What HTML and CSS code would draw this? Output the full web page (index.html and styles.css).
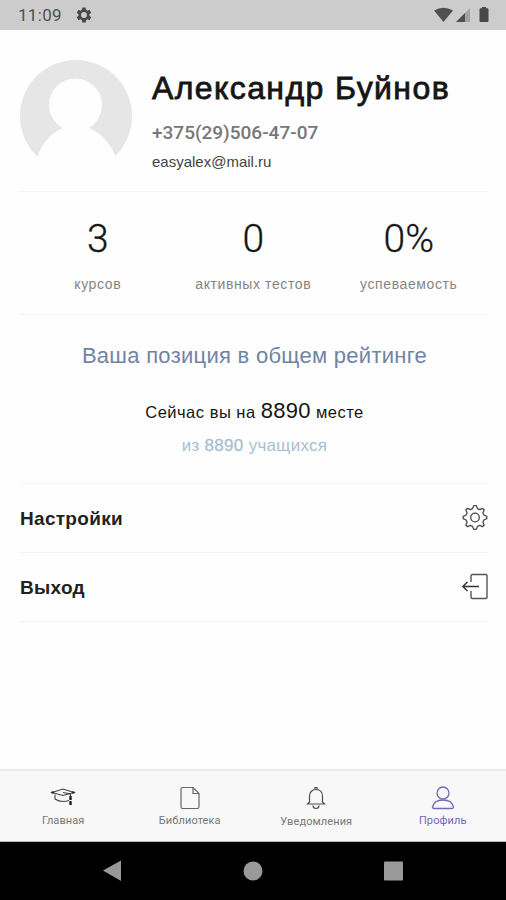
FILE: index.html
```html
<!DOCTYPE html>
<html lang="ru">
<head>
  <meta charset="UTF-8">
  <meta name="viewport" content="width=device-width, initial-scale=1.0">
  <title>Профиль</title>
  <link rel="stylesheet" href="styles.css">
</head>
<body>
  <div class="status-bar">
    <span class="time">11:09</span>
    <svg class="status-gear" width="16" height="16" viewBox="3.500 3 19 18"><path fill="#484848" fill-rule="evenodd" d="M19.400 13a7.500 7.500 0 0 0 0-2l2.100-1.600-2-3.500-2.500 1a7 7 0 0 0-1.700-1L15 3.200h-4l-.4 2.700a7 7 0 0 0-1.700 1l-2.500-1-2 3.500L6.500 11a7.500 7.500 0 0 0 0 2l-2.100 1.600 2 3.500 2.500-1a7 7 0 0 0 1.700 1l.4 2.700h4l.4-2.700a7 7 0 0 0 1.700-1l2.500 1 2-3.500zM13 15.500a3.500 3.500 0 1 1 0-7 3.500 3.500 0 0 1 0 7z"/></svg>
    <svg class="status-icons" width="58" height="18" viewBox="0 0 58 18">
      <path fill="#505050" d="M0 4.500Q9.500-1 19 4.500L9.500 16z"/>
      <path fill="#a2a2a2" d="M22 16 36 2v14z"/>
      <path fill="#505050" d="M22 16 31 7v9z"/>
      <path fill="#484848" d="M48 2.200V1h4v1.200h1.500q1 0 1 1V15q0 1-1 1h-7q-1 0-1-1V3.200q0-1 1-1z"/>
    </svg>
  </div>

  <main class="profile">
    <section class="user">
      <svg class="avatar" width="112" height="112" viewBox="0 0 112 112">
        <circle cx="56" cy="56" r="56" fill="#e6e6e6"/>
        <path fill="#fefefe" d="M18 95C23 82 31 73 43 68C34 63 29 54 29 45a26.500 26.500 0 0 1 53 0C82 54 77 63 69 68C81 73 89 82 95 95V112H18z"/>
      </svg>
      <div class="user-info">
        <h1>Александр Буйнов</h1>
        <div class="phone">+375(29)506-47-07</div>
        <div class="email">easyalex@mail.ru</div>
      </div>
    </section>

    <section class="stats">
      <div class="stat"><b>3</b><span>курсов</span></div>
      <div class="stat"><b>0</b><span>активных тестов</span></div>
      <div class="stat"><b>0%</b><span>успеваемость</span></div>
    </section>

    <section class="rating">
      <h2>Ваша позиция в общем рейтинге</h2>
      <p class="place">Сейчас вы на <b>8890</b> месте</p>
      <p class="total">из <b>8890</b> учащихся</p>
    </section>

    <a class="row">
      <span class="settings">Настройки</span>
      <svg width="28" height="28" viewBox="-14 -13.500 28 28" fill="none" stroke="#484848" stroke-width="1.300" stroke-linejoin="round">
        <path d="M-1.200-11.800H1.200L2.500-8.900L4.700-7.900L7.500-9.200L9.200-7.500L7.900-4.700L8.900-2.500L11.800-1.200V1.200L8.900 2.500L7.900 4.700L9.200 7.500L7.500 9.200L4.700 7.900L2.500 8.900L1.200 11.800H-1.200L-2.500 8.900L-4.700 7.900L-7.500 9.200L-9.200 7.500L-7.900 4.700L-8.900 2.500L-11.800 1.200V-1.200L-8.900-2.500L-7.900-4.700L-9.200-7.500L-7.500-9.200L-4.700-7.900L-2.500-8.900z"/>
        <circle r="4.300"/>
      </svg>
    </a>
    <a class="row">
      <span class="logout">Выход</span>
      <svg width="28" height="28" viewBox="0 0 28 28" fill="none" stroke="#555" stroke-width="1.400">
        <path d="M10 9V3q0-1.500 1.500-1.500H25q1 0 1 1V24.500q0 1-1 1H11.500q-1.500 0-1.500-1.500V18"/>
        <path stroke="#333" d="M18 13.500H2M6.500 9 1.800 13.500l4.700 4.500"/>
      </svg>
    </a>
  </main>

  <nav class="tabs">
    <a class="tab home">
      <svg width="26" height="26" viewBox="0 0 26 26" fill="none" stroke="#444" stroke-width="1.100">
        <path d="M2 7.500 13 4l11 3.500L13 10.500zM5 9.500V14q3.500 2.500 8 2.500 3 0 6-1M13 7.500l7.500 1.500v4"/>
        <path stroke="#222" stroke-width="2.400" stroke-dasharray="4 1" d="M20.500 11v9"/>
        <path stroke="#222" stroke-width="2" d="M1.500 7.500h2.500M22 7.500h2.500"/>
      </svg>
      <span>Главная</span>
    </a>
    <a class="tab library">
      <svg width="26" height="26" viewBox="0 0 26 26" fill="none" stroke="#666" stroke-width="1.200">
        <path d="M5.500 2.500H16l6 6V22q0 1.500-1.500 1.500h-15Q4 23.500 4 22V4Q4 2.500 5.500 2.500zM16 2.500v6h6"/>
      </svg>
      <span>Библиотека</span>
    </a>
    <a class="tab alerts">
      <svg width="26" height="26" viewBox="0 0 26 26" fill="none" stroke="#4c4c4c" stroke-width="1.200">
        <path d="M4.500 19 6.500 17V11.500C6.500 7 9 4.500 13 4.500s6.500 2.500 6.500 7V17l2 2zM10 20.500q0 3 3 3t3-3M12 4V2.500h2V4"/>
      </svg>
      <span>Уведомления</span>
    </a>
    <a class="tab active">
      <svg width="26" height="26" viewBox="0 0 26 26" fill="none" stroke="#7468b5" stroke-width="1.300">
        <circle cx="13" cy="8" r="6"/>
        <path d="M2.500 22C3.500 17 7.500 15 13 15s9.500 2 10.500 7q0 1.500-1.500 1.500H4q-1.500 0-1.500-1.500z"/>
      </svg>
      <span>Профиль</span>
    </a>
  </nav>

  <div class="system-nav">
    <svg width="506" height="58" viewBox="0 0 506 58" fill="#999">
      <path d="M103 28.500 121 18.500V39z"/>
      <circle cx="253" cy="29" r="9.500"/>
      <rect x="384" y="19.500" width="19" height="19" rx="1"/>
    </svg>
  </div>
</body>
</html>
```
FILE: styles.css
```css
* {
  box-sizing: border-box;
}
body {
  margin: 0;
  height: 900px;
  display: flex;
  flex-direction: column;
  background: #fefefe;
  color: #151515;
  font-family: "Liberation Sans", Arial, sans-serif;
  overflow: hidden;
}
h1, h2, p {
  margin: 0;
  font-weight: normal;
}
b {
  font-weight: normal;
}
.status-bar {
  height: 30px;
  padding: 0 14px 0 18px;
  display: flex;
  align-items: center;
  background: #ccc;
}
.time {
  width: 58px;
  font: 17px/30px Roboto, sans-serif;
  letter-spacing: 0.3px;
  color: #505050;
}
.status-icons {
  margin-left: auto;
}
.profile {
  flex: 1;
  padding: 0 17px 0 20px;
}
.user {
  height: 162px;
  padding-top: 30px;
  display: flex;
  gap: 20px;
  border-bottom: 1px solid #f6f6f6;
}
.user-info {
  padding-top: 10px;
  white-space: nowrap;
}
h1 {
  font-size: 32px;
  line-height: 36px;
  letter-spacing: 1.4px;
  -webkit-text-stroke: 0.8px #151515;
}
.phone {
  margin-top: 15px;
  font: 500 19px/24px Roboto, sans-serif;
  color: #777;
}
.email {
  margin-top: 8px;
  font-size: 15px;
  line-height: 18px;
  color: #444;
}
.stats {
  height: 123px;
  display: flex;
  border-bottom: 1px solid #f6f6f6;
}
.stat {
  width: 155.5px;
  padding-top: 25px;
  text-align: center;
}
.stat b {
  display: block;
  font: 300 39px/44px Roboto, sans-serif;
  -webkit-text-stroke: 0.3px #151515;
}
.stat span {
  display: block;
  margin-top: 14px;
  font-size: 14px;
  line-height: 18px;
  letter-spacing: 0.6px;
  color: #858585;
}
.rating {
  height: 169px;
  padding-top: 27px;
  text-align: center;
  border-bottom: 1px solid #f4f4f4;
}
h2 {
  font-size: 22px;
  line-height: 28px;
  letter-spacing: 0.28px;
  color: #7184a4;
}
.place {
  margin-top: 28px;
  font-size: 16.5px;
  line-height: 26px;
  letter-spacing: 0.5px;
}
.place b {
  font-size: 22px;
  letter-spacing: 0.3px;
}
.total {
  margin-top: 9px;
  font-size: 17px;
  line-height: 24px;
  letter-spacing: 0.3px;
  color: #a9bfce;
}
.total b {
  -webkit-text-stroke: 0.3px #a9bfce;
}
.row {
  height: 69px;
  display: flex;
  align-items: center;
  justify-content: space-between;
  border-bottom: 1px solid #f4f4f4;
  font-size: 19px;
}
.row span {
  margin-top: 2px;
  font-weight: bold;
  letter-spacing: 0.3px;
  color: #222;
}
.tabs {
  height: 73px;
  display: flex;
  background: #f8f8f8;
  border-top: 2px solid #eaeaea;
  border-bottom: 1px solid #bbb;
}
.tab {
  flex: 1;
  padding-top: 14px;
  display: flex;
  flex-direction: column;
  align-items: center;
  font: 11px/16px Roboto, sans-serif;
  color: #777;
}
.tab span {
  margin-top: 2px;
  letter-spacing: 0.1px;
}
.alerts span {
  margin-top: 3px;
}
.active {
  color: #7468b5;
}
.system-nav {
  height: 58px;
  background: #000;
}
```
